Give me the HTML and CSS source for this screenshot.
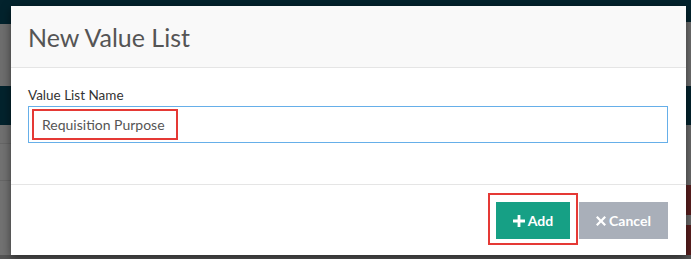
FILE: index.html
```html
<!DOCTYPE html>
<html lang="en">
<head>
  <meta charset="UTF-8">
  <title>New Value List</title>
  <link rel="stylesheet" href="styles.css">
</head>
<body>
  <div class="modal">
    <div class="modal-header">
      <h4 class="modal-title">New Value List</h4>
    </div>
    <div class="modal-body">
      <label for="listName">Value List Name</label>
      <div class="field">
        <input id="listName" type="text" value="Requisition Purpose">
        <span class="mark mark-input"></span>
      </div>
    </div>
    <div class="modal-footer">
      <div class="btn-wrap">
        <button class="btn btn-add">
          <svg class="icon" viewBox="0 0 12 12"><path d="M4.6 0h2.8v4.6H12v2.8H7.4V12H4.6V7.4H0V4.6h4.6z"/></svg>Add
        </button>
        <span class="mark mark-add"></span>
      </div>
      <button class="btn btn-cancel">
        <svg class="icon" viewBox="0 0 10 10"><path d="M1.6 0L5 3.4 8.4 0 10 1.6 6.6 5 10 8.4 8.4 10 5 6.6 1.6 10 0 8.4 3.4 5 0 1.6z"/></svg>Cancel
      </button>
    </div>
  </div>
</body>
</html>
```

FILE: styles.css
```css
* {
  box-sizing: border-box;
}

html, body {
  height: 100%;
}

body {
  margin: 0;
  padding: 6px 5px 4px 11px;
  font-family: Lato, "Open Sans", sans-serif;
  background:
    linear-gradient(to bottom,
      #03232d 0, #03232d 22px,
      #6e6e6e 22px, #6e6e6e 86px,
      #03232d 86px, #03232d 125px,
      #6b6b6b 125px, #6b6b6b 185px,
      #5a1e1e 185px, #5a1e1e 215px,
      #6b6b6b 215px, #6b6b6b 225px,
      #5a1e1e 225px, #5a1e1e 255px,
      #555 255px) right top / 6px 100% no-repeat,
    linear-gradient(to bottom,
      #03232d 0, #03232d 24px,
      #6e6e6e 24px, #6e6e6e 86px,
      #03232d 86px, #03232d 125px,
      #707070 125px, #707070 143px,
      #666 143px, #666 144px,
      #727272 144px, #727272 180px,
      #666 180px, #666 181px,
      #727272 181px, #727272 255px,
      #555 255px);
  background-color: #03232d;
}

.modal {
  width: 675px;
  height: 249px;
  background: #fff;
  box-shadow: 0 3px 9px rgba(0, 0, 0, 0.5);
  display: flex;
  flex-direction: column;
}

.modal-header {
  height: 62px;
  padding: 0 17px;
  background: #f9f9f9;
  border-bottom: 1px solid #e5e5e5;
  display: flex;
  align-items: center;
}

.modal-title {
  margin: 0;
  font-size: 25px;
  font-weight: normal;
  color: #555;
}

.modal-body {
  height: 116px;
  padding: 18px 18px 0 17px;
}

label {
  display: block;
  font-size: 13.5px;
  line-height: 18px;
  color: #333;
  margin-bottom: 2px;
}

.field {
  position: relative;
}

input {
  width: 100%;
  height: 37px;
  padding: 0 13px;
  border: 1px solid #66afe9;
  border-radius: 0;
  font-family: inherit;
  font-size: 14px;
  color: #555;
  outline: none;
}

.mark {
  position: absolute;
  border: 2px solid #e53935;
  pointer-events: none;
}

.mark-input {
  left: 4px;
  top: 3px;
  width: 146px;
  height: 31px;
}

.modal-footer {
  flex: 1;
  border-top: 1px solid #e5e5e5;
  padding: 17px 18px 0 0;
  display: flex;
  justify-content: flex-end;
  align-items: flex-start;
  gap: 9px;
}

.btn-wrap {
  position: relative;
}

.mark-add {
  left: -8px;
  top: -9px;
  width: 90px;
  height: 52px;
}

.btn {
  height: 37px;
  border: none;
  border-radius: 0;
  color: #fff;
  font-family: inherit;
  font-size: 14px;
  font-weight: bold;
  display: flex;
  align-items: center;
  justify-content: center;
  gap: 3px;
  cursor: pointer;
}

.btn-add {
  width: 74px;
  background: #16a085;
}

.btn-cancel {
  width: 89px;
  background: #a9afb9;
}

.icon {
  width: 12px;
  height: 12px;
  fill: #fff;
}

.btn-cancel .icon {
  width: 10px;
  height: 10px;
}
```
